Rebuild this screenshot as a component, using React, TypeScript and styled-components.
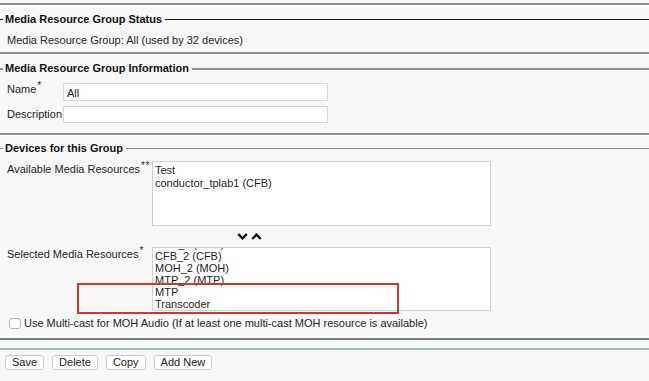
import React from 'react';
import styled, { createGlobalStyle } from 'styled-components';

const GlobalStyle = createGlobalStyle`
  html, body {
    margin: 0;
    padding: 0;
    background: #f7f7f7;
  }
  body {
    font-family: "Liberation Sans", Arial, sans-serif;
    font-size: 11px;
    color: #222;
    width: 649px;
    height: 381px;
    overflow: hidden;
  }
`;

const Page = styled.div`
  display: flex;
  flex-direction: column;
  width: 649px;
  height: 381px;
  box-sizing: border-box;
  padding-top: 3px;
  background: #f7f7f7;
`;

const Rule = styled.div<{ $color?: string; $gap?: number }>`
  flex: none;
  height: 2px;
  margin-top: ${(p) => p.$gap ?? 0}px;
  background: ${(p) => p.$color ?? '#8d8d8d'};
  box-shadow: 0 1px 0 #ffffff;
`;

const Fieldset = styled.section<{ $gap: number }>`
  display: flex;
  flex-direction: column;
  margin-top: ${(p) => p.$gap}px;
`;

const LegendRow = styled.div<{ $line: string; $weight: number }>`
  display: flex;
  align-items: center;
  height: 13px;
  &::before,
  &::after {
    content: '';
    height: ${(p) => p.$weight}px;
    background: ${(p) => p.$line};
  }
  &::before {
    width: 3px;
    flex: none;
  }
  &::after {
    flex: 1;
  }
`;

const LegendText = styled.span`
  font-weight: bold;
  color: #111;
  padding: 0 3px 0 2px;
  line-height: 13px;
  white-space: nowrap;
`;

const StatusText = styled.div`
  padding: 8px 0 0 7px;
  line-height: 13px;
  color: #262626;
`;

const FormGrid = styled.div`
  display: grid;
  grid-template-columns: 56px 265px;
  grid-template-rows: 18px 17px;
  row-gap: 5px;
  margin-top: 8px;
  padding-left: 7px;
`;

const FieldLabel = styled.label<{ $align?: string; $pad?: number }>`
  align-self: ${(p) => p.$align ?? 'center'};
  padding-top: ${(p) => p.$pad ?? 0}px;
  line-height: 13px;
  color: #262626;
  white-space: nowrap;
`;

const Req = styled.sup`
  font-size: 10px;
  line-height: 0;
  vertical-align: 4px;
  margin-left: 1px;
  letter-spacing: 0.5px;
`;

const TextInput = styled.input`
  box-sizing: border-box;
  width: 265px;
  height: 100%;
  margin: 0;
  padding: 2px 3px 0;
  border: 1px solid #d8d8d8;
  background: #ffffff;
  font-family: "Liberation Sans", Arial, sans-serif;
  font-size: 11px;
  color: #222;
  outline: none;
`;

const DevicesGrid = styled.div`
  display: grid;
  grid-template-columns: 145px 339px;
  grid-template-rows: 65px 21px 64px;
  margin-top: 6px;
  padding-left: 7px;
`;

const ListBox = styled.div<{ $lineHeight: number; $offset: number }>`
  position: relative;
  box-sizing: border-box;
  height: 100%;
  border: 1px solid #cfcfcf;
  background: #ffffff;
  overflow: hidden;
  line-height: ${(p) => p.$lineHeight}px;
  color: #1e1e1e;
  & > ul {
    list-style: none;
    margin: ${(p) => p.$offset}px 0 0;
    padding: 0 0 0 2px;
  }
`;

const ArrowCell = styled.div`
  grid-column: 2;
  display: flex;
  align-items: center;
  gap: 3px;
  padding-left: 85px;
`;

const Highlight = styled.div`
  position: absolute;
  left: 77px;
  top: 283px;
  width: 322px;
  height: 31px;
  box-sizing: border-box;
  border: 2px solid #d5352c;
  pointer-events: none;
`;

const CheckRow = styled.label`
  display: flex;
  align-items: center;
  gap: 3px;
  height: 12px;
  margin-top: 6px;
  padding-left: 9px;
  color: #262626;
  white-space: nowrap;
`;

const CheckBox = styled.span`
  box-sizing: border-box;
  width: 12px;
  height: 11px;
  border: 1px solid #b8b8b8;
  border-radius: 3px;
  background: #ffffff;
`;

const ButtonBar = styled.div`
  display: flex;
  gap: 8px;
  margin-top: 5px;
  padding-left: 5px;
`;

const Button = styled.button`
  box-sizing: border-box;
  height: 15px;
  margin: 0;
  padding: 0 6px;
  border: 1px solid #cdcdcd;
  border-radius: 3px;
  background: #ffffff;
  font-family: "Liberation Sans", Arial, sans-serif;
  font-size: 11px;
  line-height: 13px;
  color: #222;
`;

const Wrapper = styled.div`
  position: relative;
`;

const Chevron: React.FC<{ up?: boolean }> = ({ up }) => (
  <svg width="11" height="7" viewBox="0 0 11 7">
    <path
      d={up ? 'M1.2 6 L5.5 1.6 L9.8 6' : 'M1.2 1 L5.5 5.4 L9.8 1'}
      fill="none"
      stroke="#111"
      strokeWidth="2.4"
      strokeLinejoin="miter"
    />
  </svg>
);

export default function App() {
  return (
    <>
      <GlobalStyle />
      <Wrapper>
        <Page>
          <Rule />
          <Fieldset $gap={8}>
            <LegendRow $line="#1a1a1a" $weight={1}>
              <LegendText>Media Resource Group Status</LegendText>
            </LegendRow>
            <StatusText>Media Resource Group: All (used by 32 devices)</StatusText>
          </Fieldset>
          <Rule $gap={5} />
          <Fieldset $gap={8}>
            <LegendRow $line="#8d8d8d" $weight={2}>
              <LegendText>Media Resource Group Information</LegendText>
            </LegendRow>
            <FormGrid>
              <FieldLabel $align="start">
                Name<Req>*</Req>
              </FieldLabel>
              <TextInput defaultValue="All" />
              <FieldLabel>Description</FieldLabel>
              <TextInput defaultValue="" />
            </FormGrid>
          </Fieldset>
          <Rule $gap={10} />
          <Fieldset $gap={7}>
            <LegendRow $line="#8d8d8d" $weight={1}>
              <LegendText>Devices for this Group</LegendText>
            </LegendRow>
            <DevicesGrid>
              <FieldLabel $align="start" $pad={2}>
                Available Media Resources<Req>**</Req>
              </FieldLabel>
              <ListBox $lineHeight={13} $offset={2}>
                <ul>
                  <li>Test</li>
                  <li>conductor_tplab1 (CFB)</li>
                </ul>
              </ListBox>
              <ArrowCell>
                <Chevron />
                <Chevron up />
              </ArrowCell>
              <FieldLabel $align="start" $pad={1}>
                Selected Media Resources<Req>*</Req>
              </FieldLabel>
              <ListBox $lineHeight={12.1} $offset={-10}>
                <ul>
                  <li>ANN_2 (ANN)</li>
                  <li>CFB_2 (CFB)</li>
                  <li>MOH_2 (MOH)</li>
                  <li>MTP_2 (MTP)</li>
                  <li>MTP</li>
                  <li>Transcoder</li>
                </ul>
              </ListBox>
            </DevicesGrid>
            <CheckRow>
              <CheckBox />
              Use Multi-cast for MOH Audio (If at least one multi-cast MOH resource is available)
            </CheckRow>
          </Fieldset>
          <Rule $gap={9} $color="#7e7e7e" />
          <Rule $gap={8} $color="#a2b6bc" />
          <ButtonBar>
            <Button>Save</Button>
            <Button>Delete</Button>
            <Button>Copy</Button>
            <Button>Add New</Button>
          </ButtonBar>
        </Page>
        <Highlight />
      </Wrapper>
    </>
  );
}
